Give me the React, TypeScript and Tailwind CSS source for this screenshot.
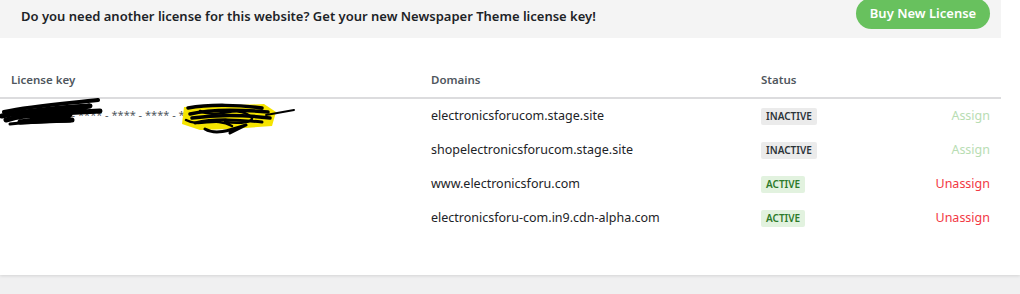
import { Fragment } from "react"

interface DomainRow {
  domain: string
  active: boolean
}

const rows: DomainRow[] = [
  { domain: "electronicsforucom.stage.site", active: false },
  { domain: "shopelectronicsforucom.stage.site", active: false },
  { domain: "www.electronicsforu.com", active: true },
  { domain: "electronicsforu-com.in9.cdn-alpha.com", active: true },
]

function Redaction() {
  // hand-drawn scribbles hiding the key
  return (
    <svg
      className="pointer-events-none absolute left-0 top-0"
      width="300"
      height="40"
      viewBox="0 0 300 40"
      fill="none"
    >
      <path d="M184 9 L264 6 L276 14 L272 28 L230 31 L200 32 L182 26 Z" fill="#f5e400" />
      <g stroke="#000" strokeLinecap="round" strokeLinejoin="round">
        <path d="M4 14 C30 8 60 6 98 2" strokeWidth="4" />
        <path d="M2 18 C30 12 55 10 90 8 L40 16 C60 15 80 14 100 13" strokeWidth="5" />
        <path d="M6 22 C25 16 50 16 70 17 L20 24 C40 23 55 22 72 22" strokeWidth="5" />
        <path d="M10 26 C30 24 50 24 70 23" strokeWidth="3" />
        <path d="M188 10 C210 6 240 7 262 10 M190 16 C215 10 245 12 268 14 M192 20 C220 16 245 17 270 20" strokeWidth="3.5" />
        <path d="M195 25 C215 20 240 22 262 24 M205 31 C215 37 228 33 246 27 L230 35" strokeWidth="3" />
        <path d="M200 13 C220 22 235 6 250 18 C258 24 240 26 225 24 M186 22 C200 30 215 18 232 28" strokeWidth="2.5" />
        <path d="M266 17 L294 12" strokeWidth="2" />
      </g>
    </svg>
  )
}

export default function App() {
  return (
    <div
      className="min-h-[294px] bg-[#f0f0f1]"
      style={{ fontFamily: '"Noto Sans", "Open Sans", Arial, sans-serif' }}
    >
      <div className="bg-white pb-[40px] shadow-[0_1px_3px_rgba(0,0,0,0.12)]">
        <div className="w-[1001px]">
          {/* Banner */}
          <div className="flex h-[38px] items-start justify-between bg-[#f4f4f4] pl-[21px] pr-[11px]">
            <p className="pt-[7px] text-[13px] font-semibold leading-[18px] text-[#1d2327]">
              Do you need another license for this website? Get your new Newspaper Theme license key!
            </p>
            <button className="-mt-[2px] flex h-[31px] w-[134px] items-center justify-center rounded-full bg-[#68c15e] pt-[1px] text-[13px] font-semibold text-white">
              Buy New License
            </button>
          </div>

          {/* Table */}
          <div className="grid grid-cols-[420px_330px_1fr] items-center border-b-2 border-[#dcdcde] pl-[11px] pr-[11px] pt-[33px] pb-[8px] text-[11.5px] font-semibold leading-[18px] text-[#50575e]">
            <span>License key</span>
            <span>Domains</span>
            <span>Status</span>
          </div>

          <div className="grid grid-cols-[420px_330px_1fr] pl-[11px] pr-[11px]">
            {rows.map((row, i) => (
              <Fragment key={row.domain}>
                <div className="relative h-[34px]">
                  {i === 0 && (
                    <>
                      <span className="absolute left-[0px] top-[8px] whitespace-nowrap text-[11px] text-[#50575e]">
                        **** - **** - **** - **** - **** - ****
                      </span>
                      <div className="absolute -left-[11px] top-[-1px]">
                        <Redaction />
                      </div>
                    </>
                  )}
                </div>
                <div className="flex h-[34px] items-center text-[12.5px] text-[#1d2327]">
                  {row.domain}
                </div>
                <div className="flex h-[34px] items-center justify-between">
                  {row.active ? (
                    <span className="rounded-[2px] bg-[#e2f2df] px-[5px] py-[1px] text-[10px] font-semibold leading-[15px] text-[#2d7a2a]">
                      ACTIVE
                    </span>
                  ) : (
                    <span className="rounded-[2px] bg-[#ebebeb] px-[5px] py-[1px] text-[10px] font-semibold leading-[15px] text-[#2c3338]">
                      INACTIVE
                    </span>
                  )}
                  {row.active ? (
                    <span className="text-[12.5px] text-[#f23844]">Unassign</span>
                  ) : (
                    <span className="text-[12.5px] text-[#b8ddb3]">Assign</span>
                  )}
                </div>
              </Fragment>
            ))}
          </div>
        </div>
      </div>
    </div>
  )
}
